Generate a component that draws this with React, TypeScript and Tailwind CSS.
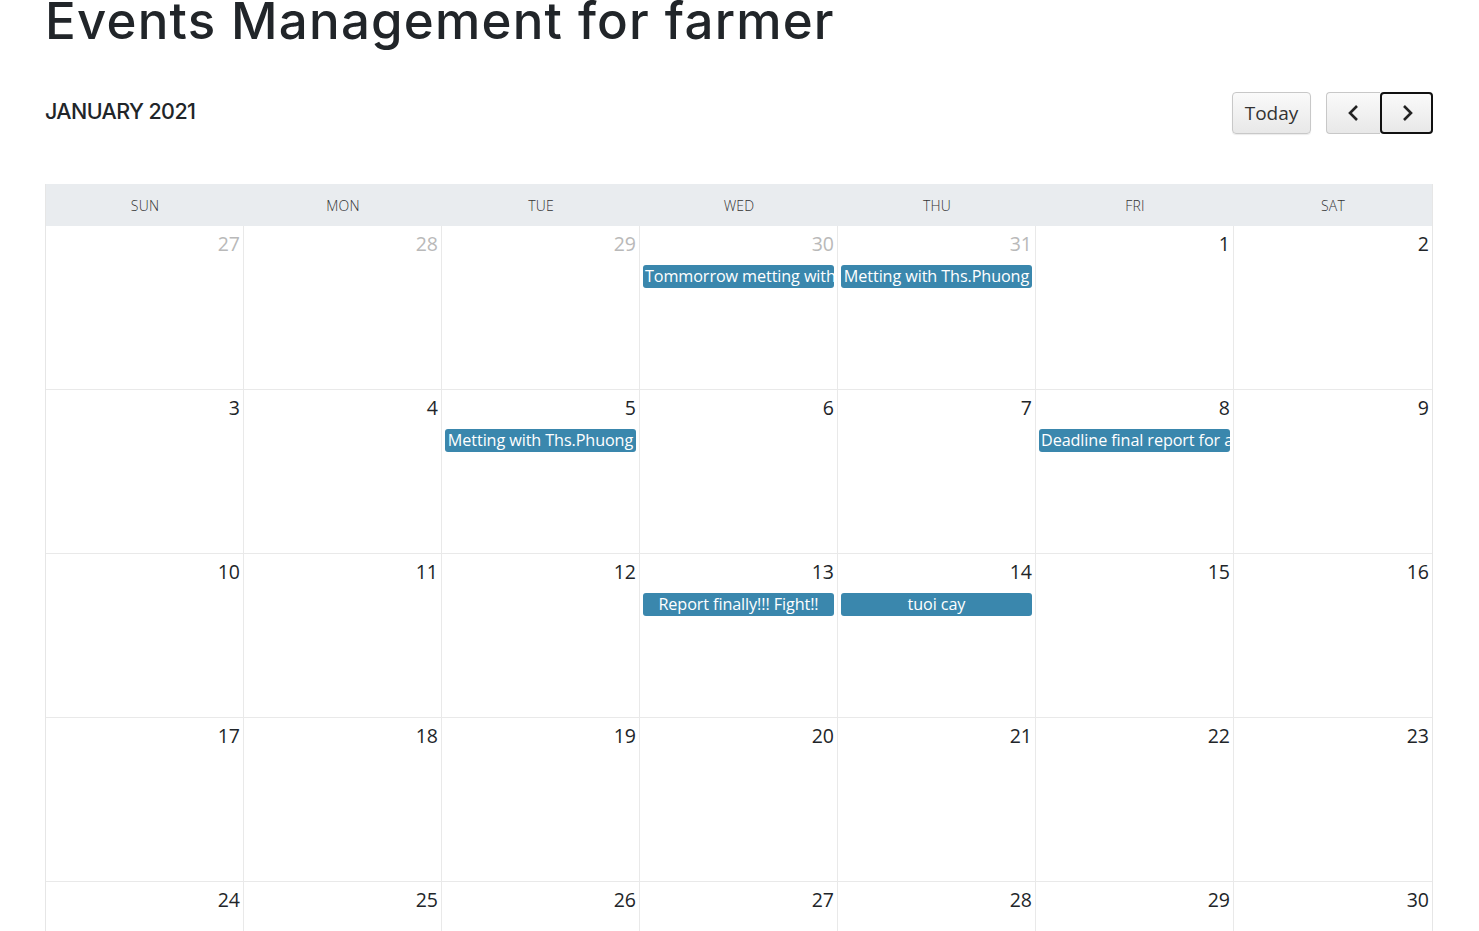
import React from 'react';

type Ev = { title: string };
type Day = { n: number; other?: boolean; ev?: Ev };

const weeks: Day[][] = [
  [
    { n: 27, other: true },
    { n: 28, other: true },
    { n: 29, other: true },
    { n: 30, other: true, ev: { title: 'Tommorrow metting with Ths.Phuong' } },
    { n: 31, other: true, ev: { title: 'Metting with Ths.Phuong' } },
    { n: 1 },
    { n: 2 },
  ],
  [
    { n: 3 },
    { n: 4 },
    { n: 5, ev: { title: 'Metting with Ths.Phuong' } },
    { n: 6 },
    { n: 7 },
    { n: 8, ev: { title: 'Deadline final report for all' } },
    { n: 9 },
  ],
  [
    { n: 10 },
    { n: 11 },
    { n: 12 },
    { n: 13, ev: { title: 'Report finally!!! Fight!!' } },
    { n: 14, ev: { title: 'tuoi cay' } },
    { n: 15 },
    { n: 16 },
  ],
  [{ n: 17 }, { n: 18 }, { n: 19 }, { n: 20 }, { n: 21 }, { n: 22 }, { n: 23 }],
  [{ n: 24 }, { n: 25 }, { n: 26 }, { n: 27 }, { n: 28 }, { n: 29 }, { n: 30 }],
];

const days = ['SUN', 'MON', 'TUE', 'WED', 'THU', 'FRI', 'SAT'];

const Chevron = ({ dir }: { dir: 'left' | 'right' }) => (
  <svg width="14" height="18" viewBox="0 0 14 18" fill="none">
    <path
      d={dir === 'left' ? 'M10 2 L3 9 L10 16' : 'M4 2 L11 9 L4 16'}
      stroke="#222"
      strokeWidth="2.6"
      strokeLinecap="butt"
      strokeLinejoin="miter"
    />
  </svg>
);

export default function App() {
  return (
    <div className="min-h-screen bg-white pl-[45px] pr-[46px] text-[#212529] font-['Open_Sans',sans-serif] overflow-hidden">
      <h1 className="mt-[-11px] text-[51px] leading-[64px] font-medium tracking-[1.2px] text-[#212529] font-['Inter',sans-serif]">
        Events Management for farmer
      </h1>

      <div className="mt-[39px] flex items-start justify-between">
        <h2 className="mt-[4px] text-[21.5px] leading-[30px] font-medium tracking-[-0.6px] font-['Inter',sans-serif]">
          JANUARY 2021
        </h2>
        <div className="flex items-center gap-[15px]">
          <button className="h-[42px] w-[79px] rounded-[4px] border border-[#c8c8c8] bg-gradient-to-b from-[#fafafa] to-[#e8e8e8] text-[19px] text-[#333] font-['Open_Sans',sans-serif] shadow-[0_1px_1px_rgba(0,0,0,0.08)]">
            Today
          </button>
          <div className="flex">
            <button className="flex h-[42px] w-[54px] items-center justify-center rounded-l-[4px] border border-r-0 border-[#c8c8c8] bg-gradient-to-b from-[#fafafa] to-[#e8e8e8]">
              <Chevron dir="left" />
            </button>
            <button className="flex h-[42px] w-[53px] items-center justify-center rounded-[4px] border-2 border-[#111] bg-gradient-to-b from-[#fafafa] to-[#e8e8e8]">
              <Chevron dir="right" />
            </button>
          </div>
        </div>
      </div>

      <div className="mt-[50px] border-l border-r border-[#e6e6e6]">
        <div className="grid grid-cols-7 bg-[#e9ecef] h-[42px] items-center">
          {days.map((d) => (
            <div key={d} className="text-center text-[14px] font-light text-[#333] tracking-[0.2px]">
              {d}
            </div>
          ))}
        </div>
        {weeks.map((w, wi) => (
          <div key={wi} className="grid grid-cols-7 h-[164px] border-b border-[#e9e9e9]">
            {w.map((d, di) => (
              <div
                key={di}
                className={`flex flex-col ${di < 6 ? 'border-r border-[#e9e9e9]' : ''}`}
              >
                <div
                  className={`h-[38px] pt-[5px] pr-[3px] text-right text-[19.5px] leading-[26px] font-normal ${
                    d.other ? 'text-[#b9b9b9]' : 'text-[#212529]'
                  }`}
                >
                  {d.n}
                </div>
                {d.ev && (
                  <div className="mx-[3px] mt-[1px] h-[23px] overflow-hidden whitespace-nowrap rounded-[3px] bg-[#3a87ad] px-[2px] text-center text-[16.2px] leading-[23px] text-white tracking-[-0.1px]">
                    {d.ev.title}
                  </div>
                )}
              </div>
            ))}
          </div>
        ))}
      </div>
    </div>
  );
}
